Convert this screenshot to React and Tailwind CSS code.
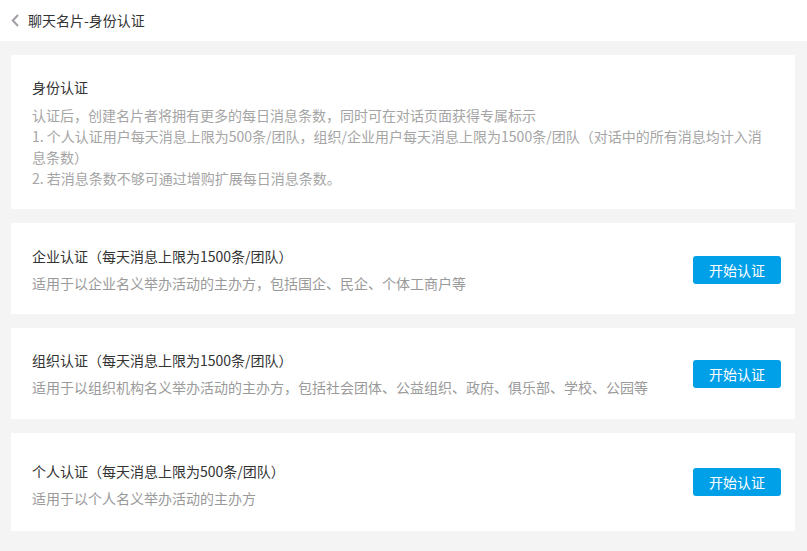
import React from 'react';

const font = { fontFamily: '"Noto Sans CJK SC", "Liberation Sans", sans-serif' };

const plans = [
    {
        title: '企业认证（每天消息上限为1500条/团队）',
        desc: '适用于以企业名义举办活动的主办方，包括国企、民企、个体工商户等',
        pad: 'pt-[23px] pb-[20px]',
        textPad: '',
    },
    {
        title: '组织认证（每天消息上限为1500条/团队）',
        desc: '适用于以组织机构名义举办活动的主办方，包括社会团体、公益组织、政府、俱乐部、学校、公园等',
        pad: 'pt-[22px] pb-[21px]',
        textPad: '',
    },
    {
        title: '个人认证（每天消息上限为500条/团队）',
        desc: '适用于以个人名义举办活动的主办方',
        pad: 'pt-[22px] pb-[22px]',
        textPad: 'pt-[6px]',
    },
];

function PlanCard({ plan }) {
    return (
        <div className={`bg-white flex items-center justify-between pl-[21px] pr-[14px] ${plan.pad}`}>
            <div className={`flex flex-col gap-[6px] ${plan.textPad}`}>
                <p className="text-[14px] leading-[21px] text-[#333333]">{plan.title}</p>
                <p className="text-[14px] leading-[21px] text-[#9a9a9a]">{plan.desc}</p>
            </div>
            <button className="w-[88px] h-[28px] rounded-[3px] bg-[#00a0e9] text-white text-[14px] leading-[28px] shrink-0">
                开始认证
            </button>
        </div>
    );
}

export default function App() {
    return (
        <div className="min-h-screen bg-[#f4f4f4]" style={font}>
            {/* top bar */}
            <header className="h-[41px] bg-white flex items-center pl-[11px] gap-[9px]">
                <svg width="8" height="13" viewBox="0 0 8 13" fill="none">
                    <polyline points="7,1 1.8,6.5 7,12" stroke="#a29ca8" strokeWidth="2" />
                </svg>
                <span className="text-[14px] text-[#333333]">聊天名片-身份认证</span>
            </header>

            <main className="pt-[14px] pb-[20px] pl-[11px] pr-[12px] flex flex-col gap-[14px]">
                <section className="bg-white pl-[21px] pr-[21px] pt-[22px] pb-[20px]">
                    <h2 className="text-[14px] leading-[21px] text-[#333333] mb-[7px]">身份认证</h2>
                    <div className="text-[14px] leading-[21px] text-[#a5a5a5]">
                        <p>认证后，创建名片者将拥有更多的每日消息条数，同时可在对话页面获得专属标示</p>
                        <p>1. 个人认证用户每天消息上限为500条/团队，组织/企业用户每天消息上限为1500条/团队（对话中的所有消息均计入消息条数）</p>
                        <p>2. 若消息条数不够可通过增购扩展每日消息条数。</p>
                    </div>
                </section>

                {plans.map((plan) => (
                    <PlanCard key={plan.title} plan={plan} />
                ))}
            </main>
        </div>
    );
}
